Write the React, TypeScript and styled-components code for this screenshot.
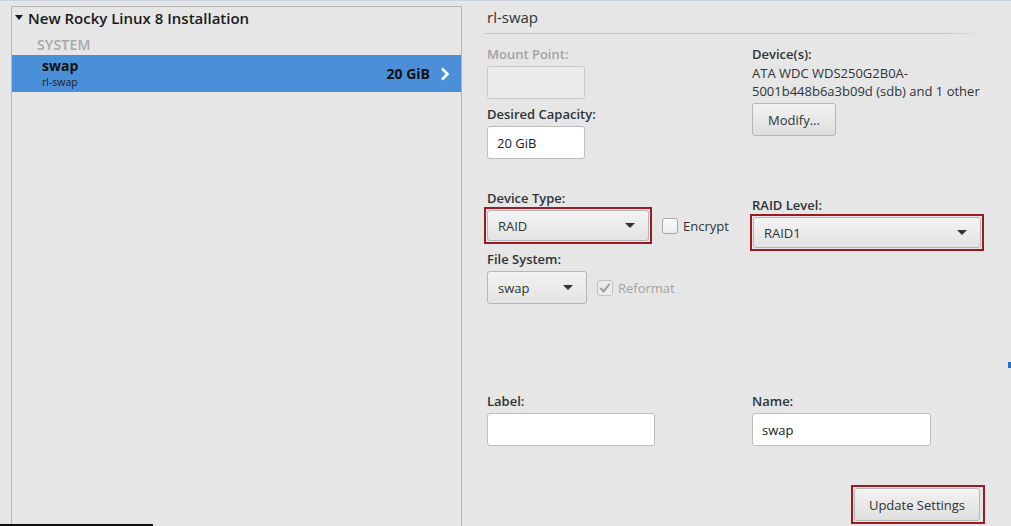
import React from "react";
import styled, { createGlobalStyle } from "styled-components";

const GlobalStyle = createGlobalStyle`
  html, body {
    margin: 0;
    padding: 0;
    background: #e6e6e6;
  }
  body {
    font-family: "Open Sans", "Noto Sans", sans-serif;
    color: #2e3436;
  }
`;

const Screen = styled.div`
  position: relative;
  width: 1011px;
  height: 526px;
  box-sizing: border-box;
  border-top: 1px solid #c9d2de;
  background: #e6e6e6;
  display: flex;
  overflow: hidden;
`;

const LeftPanel = styled.div`
  margin: 5px 0 0 11px;
  width: 452px;
  box-sizing: border-box;
  border: 1px solid #b4b4b4;
  border-bottom: none;
  display: flex;
  flex-direction: column;
`;

const TreeHeader = styled.div`
  display: flex;
  align-items: center;
  gap: 5px;
  height: 22px;
  flex-shrink: 0;
  padding-left: 3px;
  font-size: 15px;
  font-weight: 600;
  color: #1a1a1a;
`;

const SectionName = styled.div`
  padding-left: 25px;
  height: 18px;
  line-height: 18px;
  margin-top: 7px;
  flex-shrink: 0;
  font-size: 14px;
  font-weight: 600;
  letter-spacing: 0.2px;
  color: #a8a8a8;
`;

const MountRow = styled.div<{ $selected?: boolean }>`
  display: flex;
  align-items: center;
  height: 37px;
  flex-shrink: 0;
  margin-top: 1px;
  padding: 0 11px 0 30px;
  background: ${(p) => (p.$selected ? "#4a8fd8" : "transparent")};
`;

const MountNames = styled.div`
  flex: 1;
  display: flex;
  flex-direction: column;
`;

const MountName = styled.span`
  font-size: 14px;
  font-weight: 700;
  line-height: 17px;
  color: #111;
`;

const MountDevice = styled.span`
  font-size: 10.5px;
  line-height: 16px;
  color: #1c1c1c;
`;

const MountSize = styled.span`
  font-size: 14px;
  font-weight: 700;
  color: #111;
  margin-right: 10px;
`;

const RightPanel = styled.div`
  flex: 1;
  padding: 0 27px 0 22px;
  display: flex;
  flex-direction: column;
`;

const Title = styled.div`
  font-size: 15px;
  line-height: 20px;
  padding: 6px 0 6px 3px;
  color: #2e3436;
`;

const Separator = styled.div`
  height: 1px;
  background: linear-gradient(to right, #c6c6c6 92%, rgba(198, 198, 198, 0));
`;

const Form = styled.div`
  flex: 1;
  display: grid;
  grid-template-columns: 265px 1fr;
  padding-left: 3px;
`;

const Column = styled.div`
  display: flex;
  flex-direction: column;
  align-items: flex-start;
`;

const Label = styled.div<{ $disabled?: boolean; $top?: number; $bottom?: number }>`
  font-size: 13px;
  font-weight: 600;
  line-height: 18px;
  margin-top: ${(p) => p.$top ?? 0}px;
  margin-bottom: ${(p) => p.$bottom ?? 3}px;
  color: ${(p) => (p.$disabled ? "#a3a3a3" : "#2e3436")};
`;

const Field = styled.div<{ $width: number; $disabled?: boolean }>`
  width: ${(p) => p.$width}px;
  height: 33px;
  box-sizing: border-box;
  border: 1px solid ${(p) => (p.$disabled ? "#c8c8c8" : "#bdbdbd")};
  border-radius: 3px;
  background: ${(p) => (p.$disabled ? "#ebebeb" : "#ffffff")};
  display: flex;
  align-items: center;
  padding-left: 9px;
  font-size: 13px;
  color: #222;
`;

const Highlight = styled.div<{ $width: number; $left?: number }>`
  width: ${(p) => p.$width}px;
  margin-left: ${(p) => p.$left ?? 0}px;
  box-sizing: border-box;
  border: 2px solid #9b1a22;
  padding: 1px;
`;

const Combo = styled.div<{ $width?: number }>`
  width: ${(p) => (p.$width ? `${p.$width}px` : "100%")};
  height: ${(p) => (p.$width ? "33px" : "31px")};
  box-sizing: border-box;
  border: 1px solid #b6b6b6;
  border-radius: 3px;
  background: linear-gradient(#f3f3f3, #e3e3e3);
  display: flex;
  align-items: center;
  justify-content: space-between;
  padding: 0 13px 0 10px;
  font-size: 13px;
  color: #2e3436;
`;

const Arrow = styled.span`
  width: 0;
  height: 0;
  border-left: 5px solid transparent;
  border-right: 5px solid transparent;
  border-top: 5px solid #2e3436;
`;

const Button = styled.div<{ $width: number }>`
  width: ${(p) => p.$width}px;
  height: 33px;
  box-sizing: border-box;
  border: 1px solid #b6b6b6;
  border-radius: 3px;
  background: linear-gradient(#f3f3f3, #dedede);
  display: flex;
  align-items: center;
  justify-content: center;
  font-size: 13px;
  color: #2e3436;
`;

const Inline = styled.div`
  display: flex;
  align-items: center;
`;

const CheckLabel = styled.label<{ $disabled?: boolean }>`
  display: flex;
  align-items: center;
  gap: 5px;
  margin-left: 10px;
  font-size: 13px;
  color: ${(p) => (p.$disabled ? "#a3a3a3" : "#2e3436")};
`;

const CheckBox = styled.span<{ $disabled?: boolean }>`
  width: 16px;
  height: 16px;
  box-sizing: border-box;
  border: 1px solid ${(p) => (p.$disabled ? "#c3c3c3" : "#a8a8a8")};
  border-radius: 3px;
  background: ${(p) => (p.$disabled ? "#ececec" : "linear-gradient(#fbfbfb, #ececec)")};
  display: flex;
  align-items: center;
  justify-content: center;
`;

const DeviceText = styled.div`
  font-size: 13px;
  line-height: 18px;
  color: #2e3436;
`;

const Footer = styled.div`
  display: flex;
  justify-content: flex-end;
  padding: 0 0 2px;
  margin-right: -1px;
`;

const TaskStrip = styled.div`
  position: absolute;
  left: 0;
  bottom: 0;
  width: 153px;
  height: 2px;
  background: #111;
`;

const EdgeMark = styled.div`
  position: absolute;
  right: 0;
  top: 361px;
  width: 3px;
  height: 6px;
  background: #2a6fc0;
`;

const Caret = () => (
  <svg width="8" height="6" viewBox="0 0 8 6">
    <path d="M0 0 L8 0 L4 5 Z" fill="#1a1a1a" />
  </svg>
);

const Chevron = () => (
  <svg width="10" height="14" viewBox="0 0 10 14">
    <path d="M2 1.5 L7.5 7 L2 12.5" fill="none" stroke="#fff" strokeWidth="2.6" />
  </svg>
);

const Tick = () => (
  <svg width="12" height="12" viewBox="0 0 12 12">
    <path d="M1.5 6 L4.5 9.5 L10.5 2" fill="none" stroke="#9c9c9c" strokeWidth="2" />
  </svg>
);

export default function App() {
  return (
    <>
      <GlobalStyle />
      <Screen>
        <LeftPanel>
          <TreeHeader>
            <Caret />
            New Rocky Linux 8 Installation
          </TreeHeader>
          <SectionName>SYSTEM</SectionName>
          <MountRow $selected>
            <MountNames>
              <MountName>swap</MountName>
              <MountDevice>rl-swap</MountDevice>
            </MountNames>
            <MountSize>20 GiB</MountSize>
            <Chevron />
          </MountRow>
        </LeftPanel>

        <RightPanel>
          <Title>rl-swap</Title>
          <Separator />
          <Form>
            <Column>
              <Label $disabled $top={11}>Mount Point:</Label>
              <Field $width={98} $disabled />
              <Label $top={6}>Desired Capacity:</Label>
              <Field $width={98}>20 GiB</Field>
              <Label $top={30} $bottom={0}>Device Type:</Label>
              <Inline>
                <Highlight $width={168} $left={-3}>
                  <Combo>
                    RAID
                    <Arrow />
                  </Combo>
                </Highlight>
                <CheckLabel>
                  <CheckBox />
                  Encrypt
                </CheckLabel>
              </Inline>
              <Label $top={6}>File System:</Label>
              <Inline>
                <Combo $width={100}>
                  swap
                  <Arrow />
                </Combo>
                <CheckLabel $disabled>
                  <CheckBox $disabled>
                    <Tick />
                  </CheckBox>
                  Reformat
                </CheckLabel>
              </Inline>
              <Label $top={88}>Label:</Label>
              <Field $width={168} />
            </Column>

            <Column>
              <Label $top={11} $bottom={1}>Device(s):</Label>
              <DeviceText>ATA WDC WDS250G2B0A-</DeviceText>
              <DeviceText>5001b448b6a3b09d (sdb) and 1 other</DeviceText>
              <Button $width={84} style={{ marginTop: 3 }}>Modify...</Button>
              <Label $top={60} $bottom={0}>RAID Level:</Label>
              <Highlight $width={234} $left={-2}>
                <Combo>
                  RAID1
                  <Arrow />
                </Combo>
              </Highlight>
              <Label $top={141}>Name:</Label>
              <Field $width={179}>swap</Field>
            </Column>
          </Form>
          <Footer>
            <Highlight $width={134}>
              <Button $width={126}>Update Settings</Button>
            </Highlight>
          </Footer>
        </RightPanel>
        <TaskStrip />
        <EdgeMark />
      </Screen>
    </>
  );
}
